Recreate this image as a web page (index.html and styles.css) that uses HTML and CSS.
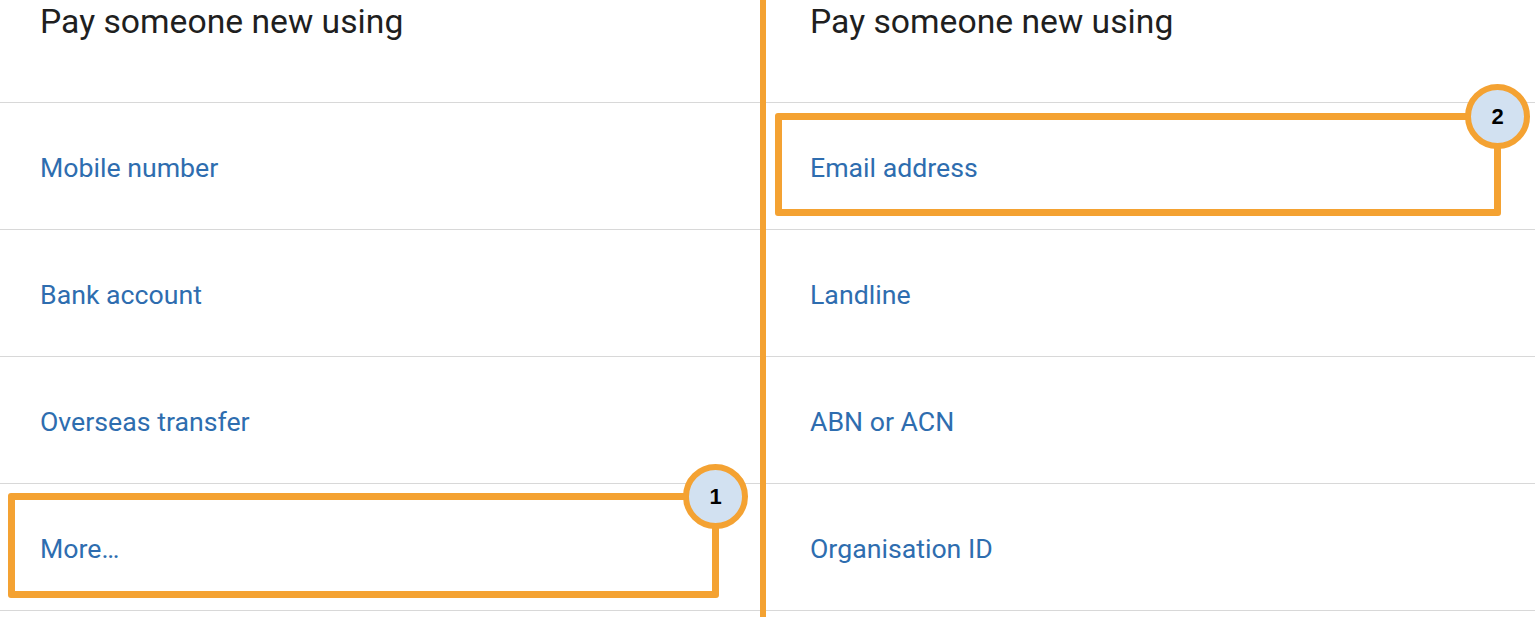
FILE: index.html
```html
<!DOCTYPE html>
<html lang="en">
<head>
<meta charset="utf-8">
<title>Pay someone new</title>
<link rel="stylesheet" href="styles.css">
</head>
<body>
<div class="page">
  <section class="panel">
    <h2 class="title">Pay someone new using</h2>
    <ul class="list">
      <li class="row">Mobile number</li>
      <li class="row">Bank account</li>
      <li class="row">Overseas transfer</li>
      <li class="row">More…
        <div class="callout callout-left"><span class="badge">1</span></div>
      </li>
    </ul>
  </section>
  <div class="separator"></div>
  <section class="panel">
    <h2 class="title">Pay someone new using</h2>
    <ul class="list">
      <li class="row">Email address
        <div class="callout callout-right"><span class="badge">2</span></div>
      </li>
      <li class="row">Landline</li>
      <li class="row">ABN or ACN</li>
      <li class="row">Organisation ID</li>
    </ul>
  </section>
</div>
</body>
</html>
```
FILE: styles.css
```css
* { box-sizing: border-box; }
html, body {
  margin: 0;
  padding: 0;
  background: #ffffff;
  overflow: hidden;
}
body {
  font-family: Roboto, "Liberation Sans", Arial, sans-serif;
  width: 1535px;
  height: 617px;
}
.page {
  display: flex;
  height: 617px;
}
.panel {
  display: flex;
  flex-direction: column;
}
.panel:first-child { width: 760px; }
.panel:last-child { flex: 1; }
.separator {
  width: 6px;
  background: #f4a232;
  flex: none;
}
.title {
  margin: 0;
  height: 103px;
  padding: 2px 0 0 40px;
  font-size: 33.7px;
  font-weight: 400;
  line-height: 40px;
  color: #1f1f1f;
  border-bottom: 1px solid #d8d8d8;
}
.panel:last-child .title,
.panel:last-child .row { padding-left: 44px; }
.list {
  list-style: none;
  margin: 0;
  padding: 0;
}
.row {
  position: relative;
  height: 127px;
  display: flex;
  align-items: center;
  padding: 3px 0 0 40px;
  font-size: 26.7px;
  color: #2e6daf;
  border-bottom: 1px solid #d8d8d8;
}
.callout {
  position: absolute;
  border: 7px solid #f4a232;
  border-radius: 3px;
}
.callout-left {
  left: 8px;
  top: 9px;
  width: 711px;
  height: 105px;
}
.callout-right {
  left: 9px;
  top: 10px;
  width: 726px;
  height: 103px;
}
.badge {
  position: absolute;
  top: -36px;
  right: -36px;
  width: 65px;
  height: 65px;
  border-radius: 50%;
  border: 6px solid #f4a232;
  background: #d2e1f1;
  display: flex;
  align-items: center;
  justify-content: center;
  font-family: "Liberation Sans", Arial, sans-serif;
  font-weight: 700;
  font-size: 22px;
  color: #000000;
}
```
